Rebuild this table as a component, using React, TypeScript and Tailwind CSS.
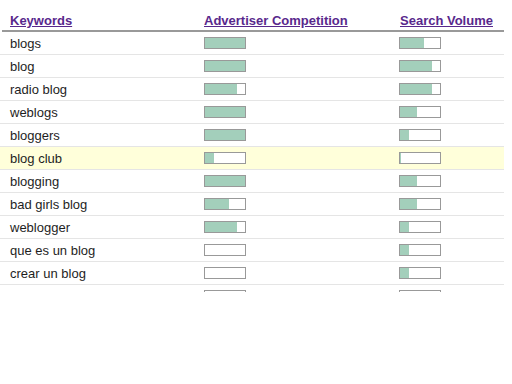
type Row = {
  keyword: string;
  competition: number; // filled px out of 40
  volume: number;
  highlight?: boolean;
};

const rows: Row[] = [
  { keyword: "blogs", competition: 40, volume: 24 },
  { keyword: "blog", competition: 40, volume: 32 },
  { keyword: "radio blog", competition: 32, volume: 32 },
  { keyword: "weblogs", competition: 40, volume: 17 },
  { keyword: "bloggers", competition: 40, volume: 9 },
  { keyword: "blog club", competition: 9, volume: 1, highlight: true },
  { keyword: "blogging", competition: 40, volume: 17 },
  { keyword: "bad girls blog", competition: 24, volume: 17 },
  { keyword: "weblogger", competition: 32, volume: 9 },
  { keyword: "que es un blog", competition: 0, volume: 9 },
  { keyword: "crear un blog", competition: 0, volume: 9 },
  { keyword: "mi blog", competition: 0, volume: 0 },
];

// small meter, 42x12 with a grey frame
function Meter({ fill }: { fill: number }) {
  return (
    <div className="w-[42px] h-[12px] border border-[#999999] bg-white">
      <div className="h-full bg-[#a3cfbb]" style={{ width: `${fill}px` }} />
    </div>
  );
}

export default function App() {
  return (
    <div
      className="w-[512px] h-[384px] bg-white text-[13px] text-[#1e1e1e]"
      style={{ fontFamily: '"Liberation Sans", Arial, sans-serif' }}
    >
      <div className="w-[504px] h-[292px] overflow-hidden">
        {/* Header */}
        <div className="ml-[2px] h-[32px] pt-[13px] grid grid-cols-[202px_195px_1fr] border-b-2 border-[#999999] leading-[15px] font-bold text-[#58288c]">
          <span className="pl-[8px]">
            <a className="underline">Keywords</a>
          </span>
          <span>
            <a className="underline">Advertiser Competition</a>
          </span>
          <span className="pl-[1px]">
            <a className="underline">Search Volume</a>
          </span>
        </div>

        {/* Rows */}
        {rows.map((r) => (
          <div
            key={r.keyword}
            className={`h-[23px] grid grid-cols-[204px_195px_1fr] items-center border-b border-[#e5e5e5] ${
              r.highlight ? "bg-[#ffffda]" : "bg-white"
            }`}
          >
            <span className="pl-[10px] leading-[15px]">{r.keyword}</span>
            <Meter fill={r.competition} />
            <Meter fill={r.volume} />
          </div>
        ))}
      </div>
    </div>
  );
}
